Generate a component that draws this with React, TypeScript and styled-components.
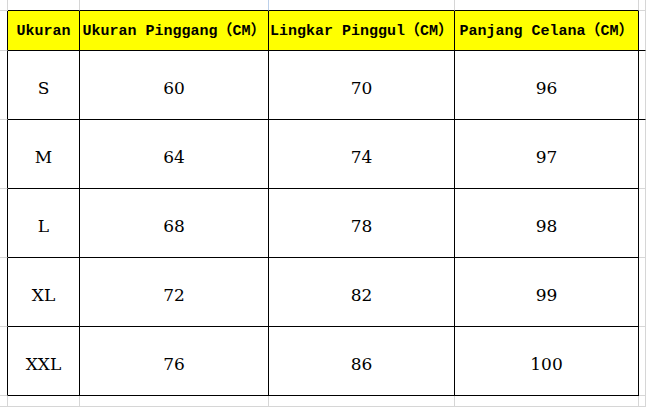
import React from "react";
import styled, { createGlobalStyle } from "styled-components";

const GlobalStyle = createGlobalStyle`
  html, body { margin: 0; padding: 0; background: #ffffff; }
  body { overflow: hidden; }
`;

const BLACK = "#000000";
const GRID = "#d6d6d6";
const GRID_SEL = "#bcd0ea";

const Sheet = styled.div`
  display: grid;
  grid-template-columns: 8px 72px 189px 186px 184px 1fr;
  grid-template-rows: 11px 40px repeat(5, 69px) 1fr;
  width: 646px;
  height: 407px;
  overflow: hidden;
  background: #ffffff;
`;

const Cell = styled.div<{ $right: string; $bottom: string; $fill?: string }>`
  box-sizing: border-box;
  border-right: 1px solid ${(p) => p.$right};
  border-bottom: 1px solid ${(p) => p.$bottom};
  background: ${(p) => p.$fill ?? "transparent"};
  display: flex;
  align-items: center;
  justify-content: center;
  white-space: nowrap;
  overflow: visible;
  min-width: 0;
  position: relative;
`;

const HeadText = styled.span`
  font-family: "Liberation Mono", "Noto Sans CJK SC", monospace;
  font-weight: 700;
  font-size: 15px;
  color: #000;
  line-height: 1;
  padding-top: 1px;
`;

const BodyText = styled.span`
  font-family: "DejaVu Serif", "Liberation Serif", serif;
  font-size: 17px;
  color: #000;
  line-height: 1;
  padding-top: 6px;
`;

const header = ["Ukuran", "Ukuran Pinggang（CM）", "Lingkar Pinggul（CM）", "Panjang Celana（CM）"];
const rows = [
  ["S", "60", "70", "96"],
  ["M", "64", "74", "97"],
  ["L", "68", "78", "98"],
  ["XL", "72", "82", "99"],
  ["XXL", "76", "86", "100"],
];

const ROWS = 8;
const COLS = 6;

const inTable = (r: number, c: number) => r >= 1 && r <= 6 && c >= 1 && c <= 4;

export default function App() {
  const cells: React.ReactNode[] = [];
  for (let r = 0; r < ROWS; r++) {
    for (let c = 0; c < COLS; c++) {
      const table = inTable(r, c);
      const right = table || inTable(r, c + 1) ? BLACK : r === 0 && c === 2 ? GRID_SEL : GRID;
      const extraBottom = c === 5 && (r === 1 || r === 2);
      const bottom = table || inTable(r + 1, c) || extraBottom ? BLACK : GRID;
      const fill = table && r === 1 ? "#ffff00" : undefined;
      let content: React.ReactNode = null;
      if (table && r === 1) content = <HeadText>{header[c - 1]}</HeadText>;
      else if (table) content = <BodyText>{rows[r - 2][c - 1]}</BodyText>;
      cells.push(
        <Cell key={`${r}-${c}`} $right={right} $bottom={bottom} $fill={fill}>
          {content}
        </Cell>
      );
    }
  }
  return (
    <>
      <GlobalStyle />
      <Sheet>{cells}</Sheet>
    </>
  );
}
